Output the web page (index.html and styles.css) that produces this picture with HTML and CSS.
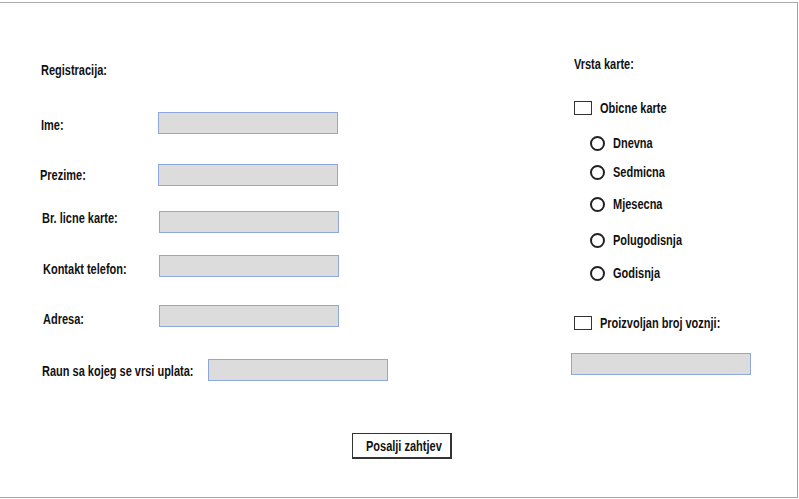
FILE: index.html
```html
<!DOCTYPE html>
<html>
<head>
<meta charset="utf-8">
<link rel="stylesheet" href="styles.css">
</head>
<body>
<div class="frame">
  <div class="content">
    <div class="left">
      <div class="title"><span class="t">Registracija:</span></div>
      <div class="row r-ime"><span class="label"><span class="t">Ime:</span></span><span class="input"></span></div>
      <div class="row r-prezime"><span class="label l-shift"><span class="t">Prezime:</span></span><span class="input"></span></div>
      <div class="row r-br"><span class="label l-in"><span class="t">Br. licne karte:</span></span><span class="input"></span></div>
      <div class="row r-kontakt"><span class="label l-in2"><span class="t">Kontakt telefon:</span></span><span class="input"></span></div>
      <div class="row r-adresa"><span class="label l-in2"><span class="t">Adresa:</span></span><span class="input"></span></div>
      <div class="row r-raun"><span class="label l-raun"><span class="t">Raun sa kojeg se vrsi uplata:</span></span><span class="input"></span></div>
    </div>
    <div class="right">
      <div class="title"><span class="t">Vrsta karte:</span></div>
      <div class="check-row c1"><span class="checkbox"></span><span class="t">Obicne karte</span></div>
      <div class="radios">
        <div class="radio-row rr1"><span class="radio"></span><span class="t">Dnevna</span></div>
        <div class="radio-row rr2"><span class="radio"></span><span class="t">Sedmicna</span></div>
        <div class="radio-row rr3"><span class="radio"></span><span class="t">Mjesecna</span></div>
        <div class="radio-row rr4"><span class="radio"></span><span class="t">Polugodisnja</span></div>
        <div class="radio-row rr5"><span class="radio"></span><span class="t">Godisnja</span></div>
      </div>
      <div class="check-row c2"><span class="checkbox"></span><span class="t">Proizvoljan broj voznji:</span></div>
      <span class="input right-input"></span>
    </div>
  </div>
  <div class="footer">
    <button class="btn"><span class="t">Posalji zahtjev</span></button>
  </div>
</div>
</body>
</html>
```

FILE: styles.css
```css
* { box-sizing: border-box; }
html, body { margin: 0; padding: 0; background: #fff; }
body {
  font-family: "Liberation Sans", Arial, sans-serif;
  font-weight: 700;
  font-size: 14px;
  color: #111;
}
.t {
  display: inline-block;
  transform: scaleX(0.785);
  transform-origin: left center;
  white-space: nowrap;
}
.frame {
  margin-top: 2px;
  width: 798px;
  height: 496px;
  border-top: 1px solid #aaaaaa;
  border-right: 1px solid #a0a0a0;
  border-bottom: 1px solid #93aab5;
  display: flex;
  flex-direction: column;
}
.content {
  display: flex;
  height: 430px;
}
.left {
  width: 566px;
  padding-left: 41px;
  padding-top: 59px;
  display: flex;
  flex-direction: column;
}
.title { height: 16px; line-height: 16px; }
.row {
  display: flex;
  align-items: center;
  height: 22px;
}
.label { width: 117px; padding-top: 3px; white-space: nowrap; }
.l-shift { margin-left: -1px; width: 118px; padding-top: 0; }
.l-in { margin-left: 1px; width: 117px; padding-top: 0; margin-top: -8px; }
.l-in2 { margin-left: 2px; width: 116px; padding-top: 5px; }
.l-raun { margin-left: 1px; width: 166px; padding-top: 1px; }
.input {
  display: block;
  width: 180px;
  height: 22px;
  background: #dcdcdc;
  border: 1px solid #8ea7dc;
}
.r-ime { margin-top: 34px; }
.r-prezime { margin-top: 30px; }
.r-br { margin-top: 25px; }
.r-kontakt { margin-top: 22px; }
.r-adresa { margin-top: 28px; }
.r-raun { margin-top: 32px; }

.right {
  width: 231px;
  padding-left: 8px;
  padding-top: 53px;
  display: flex;
  flex-direction: column;
}
.check-row {
  display: flex;
  align-items: center;
  height: 18px;
}
.checkbox {
  display: block;
  width: 18px;
  height: 14px;
  border: 1.5px solid #333;
  margin-right: 8px;
}
.c1 { margin-top: 27px; }
.radios { padding-left: 16px; display: flex; flex-direction: column; }
.radio-row { display: flex; align-items: center; height: 18px; }
.radio {
  display: block;
  width: 15px;
  height: 15px;
  border: 2px solid #222;
  border-radius: 50%;
  margin-right: 8px;
}
.rr1 { margin-top: 17px; }
.rr2 { margin-top: 11px; }
.rr3 { margin-top: 14px; }
.rr4 { margin-top: 18px; }
.rr5 { margin-top: 15px; }
.c2 { margin-top: 32px; }
.right-input { margin-top: 21px; margin-left: -3px; }

.footer {
  padding-left: 352px;
}
.btn {
  font: inherit;
  color: #111;
  width: 100px;
  height: 26px;
  background: #fff;
  border: 1px solid #333;
  border-right-width: 2px;
  border-bottom-width: 2px;
  padding: 0 0 0 13px;
  text-align: left;
}
```
